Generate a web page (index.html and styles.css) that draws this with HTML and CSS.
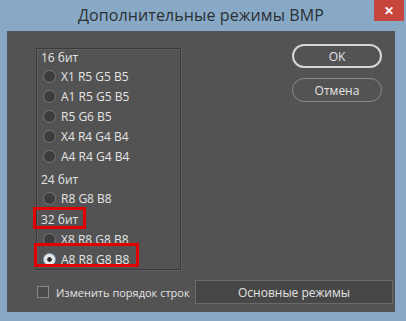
FILE: index.html
```html
<!DOCTYPE html>
<html lang="ru">
<head>
  <meta charset="UTF-8" />
  <title>Дополнительные режимы BMP</title>
  <link rel="stylesheet" href="styles.css">
</head>
<body>

  <div class="window">
    <div class="titlebar">
      <span class="title">Дополнительные режимы BMP</span>
      <span class="close">✕</span>
    </div>

    <div class="content">
      <div class="top">
        <div class="group">
          <div class="group-label">16 бит</div>
          <div class="radio"><span class="dot"></span>X1 R5 G5 B5</div>
          <div class="radio"><span class="dot"></span>A1 R5 G5 B5</div>
          <div class="radio"><span class="dot"></span>R5 G6 B5</div>
          <div class="radio"><span class="dot"></span>X4 R4 G4 B4</div>
          <div class="radio"><span class="dot"></span>A4 R4 G4 B4</div>

          <div class="group-label sec-24">24 бит</div>
          <div class="radio"><span class="dot"></span>R8 G8 B8</div>

          <div class="group-label sec-32">32 бит</div>
          <div class="radio first-32"><span class="dot"></span>X8 R8 G8 B8</div>
          <div class="radio"><span class="dot checked"></span>A8 R8 G8 B8</div>

          <!-- red annotation boxes -->
          <div class="mark mark-label"></div>
          <div class="mark mark-radio"></div>
        </div>

        <div class="buttons">
          <button class="pill ok">OK</button>
          <button class="pill">Отмена</button>
        </div>
      </div>

      <div class="bottom">
        <label class="check"><span class="box"></span>Изменить порядок строк</label>
        <button class="basic">Основные режимы</button>
      </div>
    </div>
  </div>

</body>
</html>
```

FILE: styles.css
```css
* {
  box-sizing: border-box;
}

body {
  margin: 0;
  font-family: 'Open Sans', 'Noto Sans', sans-serif;
}

.window {
  width: 406px;
  height: 321px;
  background: #88a9c6;
  padding: 0 11px 9px 7px;
}

.titlebar {
  height: 31px;
  display: flex;
  align-items: center;
  justify-content: center;
  position: relative;
}

.title {
  font-size: 16px;
  color: #2b2f33;
  margin-top: -1px;
  letter-spacing: 0.1px;
}

.close {
  position: absolute;
  top: 0;
  right: -9px;
  width: 30px;
  height: 21px;
  background: #c7453d;
  color: #fff;
  font-size: 12px;
  font-weight: bold;
  display: flex;
  align-items: center;
  justify-content: center;
}

.content {
  height: 281px;
  background: #535353;
  color: #e4e4e4;
  font-size: 12px;
  padding-top: 17px;
}

.top {
  display: flex;
  align-items: flex-start;
}

.group {
  position: relative;
  margin-left: 29px;
  width: 145px;
  height: 222px;
  border: 1px solid #3a3a3a;
  box-shadow: inset 1px 1px 0 #5f5f5f, 1px 1px 0 #5f5f5f;
  padding: 1px 0 0 4px;
}

.group-label {
  height: 16px;
  line-height: 16px;
}

.sec-24 {
  margin-top: 6px;
}

.sec-32 {
  margin-top: 4px;
}

.first-32 {
  margin-top: 1px;
}

.radio {
  height: 20px;
  display: flex;
  align-items: center;
  padding-left: 2px;
}

.dot {
  display: block;
  width: 13px;
  height: 13px;
  border-radius: 50%;
  background: #3d3d3d;
  border: 1px solid #777;
  margin-right: 5px;
  flex-shrink: 0;
}

.dot.checked {
  background: radial-gradient(circle, #2e2e2e 0 2px, #e6e6e6 2.5px);
  border-color: #8fa4c4;
}

.mark {
  position: absolute;
  border: 3px solid #e20000;
}

.mark-label {
  left: -4px;
  top: 158px;
  width: 53px;
  height: 22px;
}

.mark-radio {
  left: -3px;
  top: 194px;
  width: 105px;
  height: 24px;
}

.buttons {
  margin-left: auto;
  margin-right: 13px;
  margin-top: -4px;
  display: flex;
  flex-direction: column;
  gap: 10px;
}

.pill {
  width: 90px;
  height: 24px;
  border-radius: 12px;
  background: transparent;
  border: 1px solid #8a8a8a;
  color: #e4e4e4;
  font-family: inherit;
  font-size: 12px;
  padding: 0;
}

.pill.ok {
  border: 2px solid #d6d6d6;
}

.bottom {
  display: flex;
  align-items: center;
  margin-top: 10px;
}

.check {
  display: flex;
  align-items: center;
  margin-left: 30px;
  font-size: 11px;
}

.box {
  width: 12px;
  height: 12px;
  border: 1px solid #8a8a8a;
  background: #4a4a4a;
  margin-right: 7px;
}

.basic {
  margin-left: auto;
  margin-right: 2px;
  width: 198px;
  height: 24px;
  background: #474747;
  border: 1px solid #6a6a6a;
  color: #e4e4e4;
  font-family: inherit;
  font-size: 12px;
  padding: 0;
}
```
